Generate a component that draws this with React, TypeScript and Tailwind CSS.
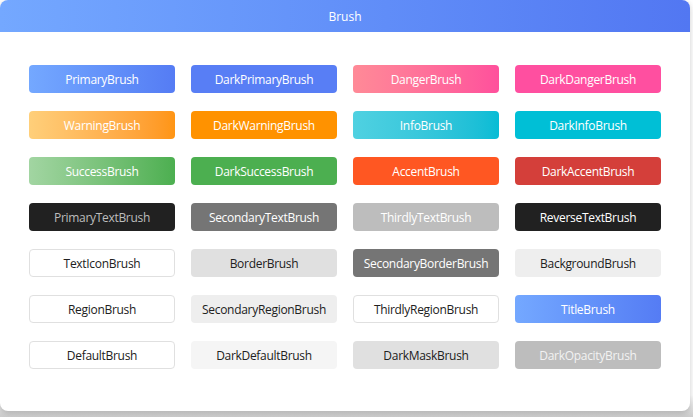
const brushes: { name: string; cls: string }[] = [
  { name: 'PrimaryBrush', cls: 'bg-gradient-to-r from-[#74a8ff] to-[#557cf4] text-white' },
  { name: 'DarkPrimaryBrush', cls: 'bg-[#587ef5] text-white' },
  { name: 'DangerBrush', cls: 'bg-gradient-to-r from-[#ff8a97] to-[#ff509c] text-white' },
  { name: 'DarkDangerBrush', cls: 'bg-[#ff4fa0] text-white' },

  { name: 'WarningBrush', cls: 'bg-gradient-to-r from-[#ffcf7a] to-[#ff9513] text-white' },
  { name: 'DarkWarningBrush', cls: 'bg-[#ff9200] text-white' },
  { name: 'InfoBrush', cls: 'bg-gradient-to-r from-[#4fd1e1] to-[#06bcd5] text-white' },
  { name: 'DarkInfoBrush', cls: 'bg-[#00bfd6] text-white' },

  { name: 'SuccessBrush', cls: 'bg-gradient-to-r from-[#a2d5a2] to-[#4caf50] text-white' },
  { name: 'DarkSuccessBrush', cls: 'bg-[#4caf50] text-white' },
  { name: 'AccentBrush', cls: 'bg-[#ff5722] text-white' },
  { name: 'DarkAccentBrush', cls: 'bg-[#d43f3a] text-white' },

  { name: 'PrimaryTextBrush', cls: 'bg-[#212121] text-[#bdbdbd]' },
  { name: 'SecondaryTextBrush', cls: 'bg-[#757575] text-white' },
  { name: 'ThirdlyTextBrush', cls: 'bg-[#bdbdbd] text-white' },
  { name: 'ReverseTextBrush', cls: 'bg-[#212121] text-white' },

  { name: 'TextIconBrush', cls: 'bg-white border border-[#e0e0e0] text-[#212121]' },
  { name: 'BorderBrush', cls: 'bg-[#e0e0e0] text-[#212121]' },
  { name: 'SecondaryBorderBrush', cls: 'bg-[#757575] text-white' },
  { name: 'BackgroundBrush', cls: 'bg-[#eeeeee] text-[#212121]' },

  { name: 'RegionBrush', cls: 'bg-white border border-[#e0e0e0] text-[#212121]' },
  { name: 'SecondaryRegionBrush', cls: 'bg-[#eeeeee] text-[#212121]' },
  { name: 'ThirdlyRegionBrush', cls: 'bg-white border border-[#e0e0e0] text-[#212121]' },
  { name: 'TitleBrush', cls: 'bg-gradient-to-r from-[#74a8ff] to-[#557cf4] text-white' },

  { name: 'DefaultBrush', cls: 'bg-white border border-[#e0e0e0] text-[#212121]' },
  { name: 'DarkDefaultBrush', cls: 'bg-[#f5f5f5] text-[#212121]' },
  { name: 'DarkMaskBrush', cls: 'bg-[#e0e0e0] text-[#212121]' },
  { name: 'DarkOpacityBrush', cls: 'bg-[#bdbdbd] text-[#f2f2f2]' },
]

export default function App() {
  return (
    <div
      className="w-[693px] h-[417px] bg-[linear-gradient(to_bottom,#ffffff_395px,#cccccc_417px)] overflow-hidden"
      style={{ fontFamily: '"Open Sans", "Noto Sans", sans-serif' }}
    >
      <div className="w-[690px] h-[411px] bg-white rounded-lg overflow-hidden flex flex-col shadow-[0_2px_6px_rgba(0,0,0,0.2)]">
        {/* Title bar */}
        <div className="h-[32px] shrink-0 flex items-center justify-center pt-[1px] bg-gradient-to-r from-[#74a8ff] to-[#5277f2] text-white text-[12px]">
          Brush
        </div>

        {/* Brush grid */}
        <div className="pl-[29px] pt-[33px] grid grid-cols-[repeat(4,146px)] gap-x-[16px] gap-y-[18px]">
          {brushes.map((b) => (
            <div
              key={b.name}
              className={`h-[28px] rounded flex items-center justify-center pt-[2px] text-[12px] tracking-[-0.3px] ${b.cls}`}
            >
              {b.name}
            </div>
          ))}
        </div>
      </div>
    </div>
  )
}
